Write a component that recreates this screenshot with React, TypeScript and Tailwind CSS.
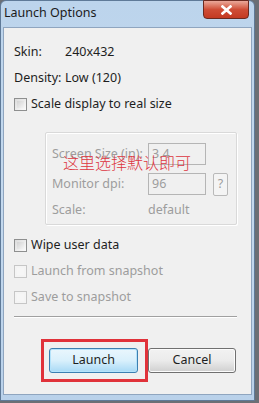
import React from "react";

const font = { fontFamily: '"Noto Sans", "Open Sans", sans-serif' };

function CheckBox({ disabled }: { disabled?: boolean }) {
  return (
    <div
      className={`w-[13px] h-[13px] border shrink-0 ${
        disabled ? "border-[#c6c6c6] bg-[#f4f4f4]" : "border-[#8e8f8f] bg-gradient-to-br from-[#dcdcdc] to-[#fbfbfb]"
      }`}
    >
      <div className={`m-[2px] w-[7px] h-[7px] ${disabled ? "bg-[#f6f6f6]" : "bg-gradient-to-br from-[#d3d3d3] to-[#f5f5f5]"}`} />
    </div>
  );
}

export default function App() {
  return (
    <div className="w-[259px] h-[403px] bg-[#6b6f75] overflow-hidden text-[12px]" style={font}>
      <div className="relative w-[255px] h-[401px] rounded-t-[6px] bg-gradient-to-b from-[#bcd4ec] via-[#c4d9ee] to-[#b9d1ea] border border-[#5f7a98] flex flex-col">
        {/* title bar */}
        <div className="h-[26px] flex items-center pl-[3px] text-[12.5px] text-[#1b1b1b] leading-none">
          <span className="-mt-[2px]">Launch Options</span>
        </div>
        <div className="absolute top-[-1px] right-[5px] w-[46px] h-[19px] rounded-b-[4px] border border-[#6b2a20] bg-gradient-to-b from-[#e9a89a] via-[#cf4d36] to-[#c43a22] flex items-center justify-center">
          <svg width="11" height="10" viewBox="0 0 11 10">
            <path d="M1.5 1.5 L9.5 8.5 M9.5 1.5 L1.5 8.5" stroke="#ffffff" strokeWidth="2.6" strokeLinecap="square" />
          </svg>
        </div>
        {/* client */}
        <div className="mx-[2px] flex-1 mb-[5px] bg-[#f0f0f0] border border-[#8fa5bf] flex flex-col px-[10px] text-[12.5px] text-[#1e1e1e] relative">
          <div className="mt-[16px] h-[16px] leading-[16px] flex">
            <span className="w-[51px]">Skin:</span>
            <span>240x432</span>
          </div>
          <div className="mt-[10px] h-[16px] leading-[16px] flex">
            <span className="w-[51px]">Density:</span>
            <span>Low (120)</span>
          </div>
          <div className="mt-[10px] h-[16px] leading-[16px] flex items-center gap-[4px]">
            <CheckBox />
            <span>Scale display to real size</span>
          </div>
          {/* group box */}
          <div className="mt-[20px] ml-[31px] w-[192px] h-[93px] border border-[#d9d9d9] shadow-[inset_1px_1px_0_#ffffff,1px_1px_0_#ffffff] rounded-[2px] flex flex-col pl-[6px] text-[#9d9d9d]">
            <div className="mt-[10px] h-[22px] flex items-center">
              <span className="w-[96px]">Screen Size (in):</span>
              <div className="w-[58px] h-[22px] border border-[#b5b5b5] bg-[#f0f0f0] leading-[20px] pl-[3px]">3.4</div>
            </div>
            <div className="mt-[8px] h-[22px] flex items-center">
              <span className="w-[96px]">Monitor dpi:</span>
              <div className="w-[58px] h-[22px] border border-[#b5b5b5] bg-[#f0f0f0] leading-[20px] pl-[3px]">96</div>
              <div className="ml-[7px] w-[15px] h-[23px] border border-[#b9b9b9] rounded-[2px] bg-[#f4f4f4] flex items-center justify-center">?</div>
            </div>
            <div className="mt-[7px] h-[16px] leading-[16px] flex">
              <span className="w-[96px]">Scale:</span>
              <span>default</span>
            </div>
          </div>
          <div className="mt-[12px] h-[16px] leading-[16px] flex items-center gap-[4px]">
            <CheckBox />
            <span>Wipe user data</span>
          </div>
          <div className="mt-[10px] h-[16px] leading-[16px] flex items-center gap-[4px] text-[#9d9d9d]">
            <CheckBox disabled />
            <span>Launch from snapshot</span>
          </div>
          <div className="mt-[10px] h-[16px] leading-[16px] flex items-center gap-[4px] text-[#9d9d9d]">
            <CheckBox disabled />
            <span>Save to snapshot</span>
          </div>
          <div className="mt-[11px] h-[2px] w-[223px] border-t border-[#a0a0a0] border-b border-b-[#ffffff]" />
          <div className="mt-[30px] flex gap-[10px] ml-[35px]">
            <div className="relative">
              <div className="w-[89px] h-[25px] rounded-[3px] border border-[#3c7fb1] bg-gradient-to-b from-[#eaf6fd] via-[#d9f0fc] to-[#a7d9f5] shadow-[inset_0_0_0_1px_#b4e3fb] flex items-center justify-center text-[#1e1e1e]">
                Launch
              </div>
              <div className="absolute left-[-8px] top-[-9px] w-[107px] h-[43px] border-[3px] border-[#e0323a]" />
            </div>
            <div className="w-[88px] h-[25px] rounded-[3px] border border-[#707070] bg-gradient-to-b from-[#f2f2f2] via-[#ebebeb] to-[#cfcfcf] shadow-[inset_0_0_0_1px_#fcfcfc] flex items-center justify-center text-[#1e1e1e]">
              Cancel
            </div>
          </div>
          {/* annotation */}
          <div
            className="absolute left-[59px] top-[123px] leading-[22px] text-[#dd3640] whitespace-nowrap"
            style={{ fontFamily: '"Noto Sans CJK SC", sans-serif', fontSize: "16px", fontWeight: 300 }}
          >
            这里选择默认即可
          </div>
        </div>
      </div>
    </div>
  );
}
